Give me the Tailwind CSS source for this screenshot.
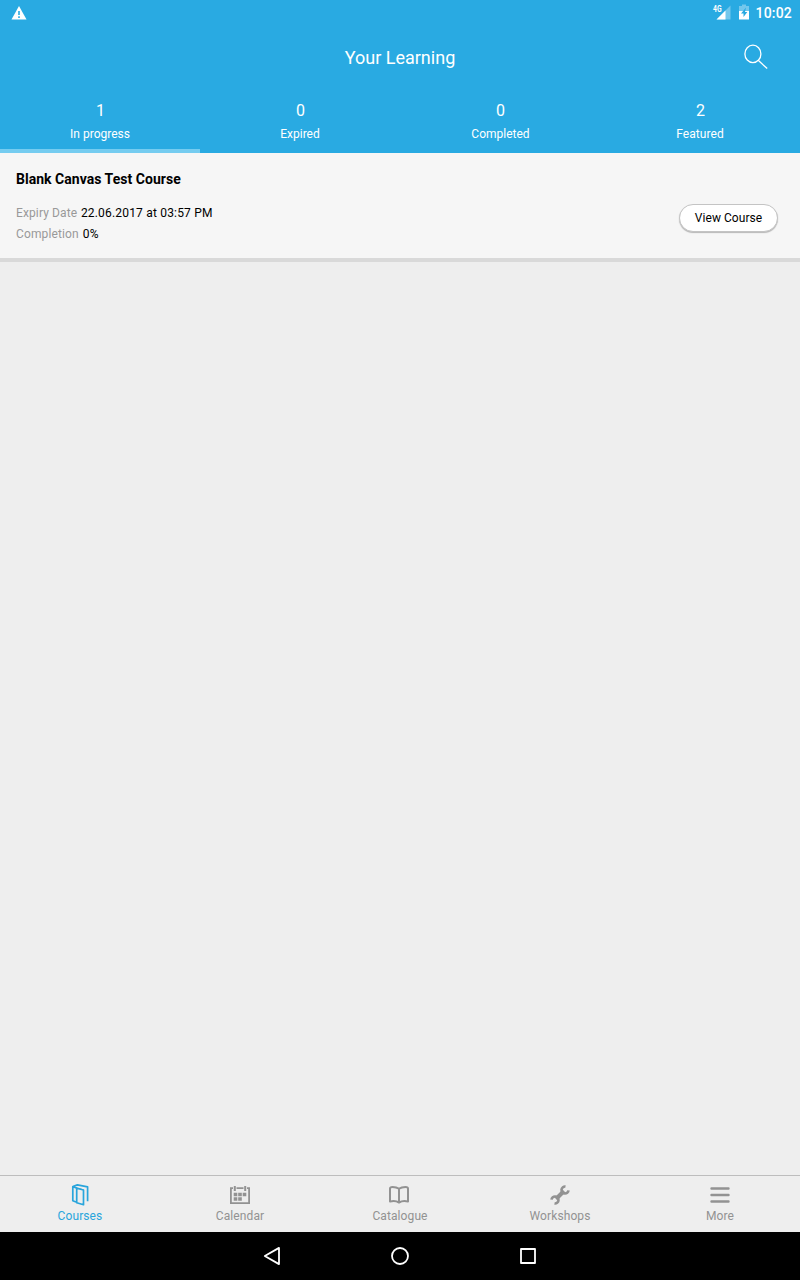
<!DOCTYPE html>
<html lang="en">
<head>
  <meta charset="UTF-8">
  <meta name="viewport" content="width=device-width, initial-scale=1.0">
  <title>Your Learning</title>
  <script src="https://cdn.jsdelivr.net/npm/@tailwindcss/browser@4"></script>
</head>
<body class="h-screen flex flex-col overflow-hidden bg-[#eeeeee] font-[Roboto,sans-serif] text-xs text-black">
  <header class="h-[153px] shrink-0 flex flex-col bg-[#29aae2] text-white">
    <!-- Status bar -->
    <div class="h-6 flex items-start justify-between pl-[11px] pr-2">
      <svg class="mt-[5px] w-4 h-4" viewBox="0 0 16 16" fill="none">
        <path d="M8 1 15.5 14.5H.5Z" fill="#fff" />
        <path d="M8 6v4M8 11.3v1.7" stroke="#29aae2" stroke-width="1.6" />
      </svg>
      <div class="flex">
        <svg class="w-[42px] h-6" viewBox="0 0 42 24" fill="none">
          <path d="M21.5 5.5v14h-14Z" fill="#fff" fill-opacity=".35" />
          <path d="M16.5 10.5v9h-9Z" fill="#fff" />
          <path d="M2 4h11v9H2Z" fill="#29aae2" />
          <text x="4" y="12" font-size="8.5" font-weight="700" fill="#fff" textLength="8.5" lengthAdjust="spacingAndGlyphs">4G</text>
          <path d="M33 4.5h4v1.5h3V11H30V6h3Z" fill="#fff" fill-opacity=".35" />
          <path d="M30 11h10v8.5H30Z" fill="#fff" />
          <path d="M37 7.5 32 13.4h2.5V17l3.8-5H36Z" fill="#29aae2" />
        </svg>
        <span class="pl-1 pt-[3px] text-sm leading-5 font-medium tracking-[.2px]">10:02</span>
      </div>
    </div>
    <!-- Title -->
    <div class="h-[66px] grid grid-cols-[1fr_auto_1fr] items-center">
      <h1 class="col-start-2 text-lg leading-6 pb-px mt-[3px]">Your Learning</h1>
      <svg class="w-7 h-7 justify-self-end mr-[30px]" viewBox="0 0 28 28" fill="none" stroke="#fff" stroke-width="1.3">
        <ellipse cx="10.9" cy="10.9" rx="8" ry="8.7" />
        <path d="m16.2 17.3 9 8.2" />
      </svg>
    </div>
    <!-- Tabs -->
    <nav class="flex-1 grid grid-cols-4 text-center">
      <a class="flex flex-col pt-[11px] border-b-4 border-[#75ccf0]">
        <span class="text-base leading-5 pl-px">1</span>
        <span class="pt-[5px] leading-4">In progress</span>
      </a>
      <a class="flex flex-col pt-[11px]">
        <span class="text-base leading-5 pl-px">0</span>
        <span class="pt-[5px] leading-4">Expired</span>
      </a>
      <a class="flex flex-col pt-[11px]">
        <span class="text-base leading-5 pl-px">0</span>
        <span class="pt-[5px] leading-4 pl-px">Completed</span>
      </a>
      <a class="flex flex-col pt-[11px]">
        <span class="text-base leading-5 pl-px">2</span>
        <span class="pt-[5px] leading-4 tracking-[.08px]">Featured</span>
      </a>
    </nav>
  </header>

  <main class="flex-1">
    <article class="h-[109px] flex justify-between pl-4 pr-[22px] bg-[#f6f6f6] border-b-4 border-[#d9d9d9]">
      <div>
        <h2 class="pt-4 text-sm leading-5 font-bold tracking-[.03px]">Blank Canvas Test Course</h2>
        <p class="pt-[14px] leading-[21px] tracking-[.12px] text-[#999]">Expiry Date <span class="ml-[.5px] tracking-[.19px] text-black">22.06.2017 at 03:57 PM</span></p>
        <p class="leading-[21px] tracking-[.12px] text-[#999]">Completion <span class="ml-px text-black">0%</span></p>
      </div>
      <button class="mt-[51px] w-[99px] h-7 rounded-full bg-white border border-[#c4c4c4] shadow-[0_1px_1px_#b8b8b8] tracking-[.05px]">View Course</button>
    </article>
  </main>

  <!-- Bottom tabs -->
  <nav class="h-[57px] shrink-0 grid grid-cols-5 border-t border-[#bdbdbd] text-center text-[#929292] tracking-[.1px]">
    <a class="flex flex-col items-center pt-[7px] text-[#29a5dc]">
      <svg class="w-6 h-6" viewBox="0 0 24 24" fill="none" stroke="currentColor" stroke-width="1.7" stroke-linejoin="round">
        <path d="M8.7 5.2 15.5 7v14.7L8.7 19.7ZM8.7 19.2l-3.9-1.4V3.5l3.9 1.7M4.8 3.5l4.6-1.6 10.2 2v14.3" />
        <path d="M4.8 3.5l10.7 3.4" stroke-width="1" />
      </svg>
      <span class="leading-4 pt-[1px]">Courses</span>
    </a>
    <a class="flex flex-col items-center pt-[7px]">
      <svg class="w-6 h-6" viewBox="0 0 24 24" fill="none" stroke="currentColor" stroke-width="1.8">
        <path d="M5 5.2H2.9v14.9h18.2V5.2H19M8.5 5.2h7" />
        <path d="M6.8 3v5M17.2 3v5" stroke-width="2" />
        <path d="M5.7 11.6h3.6m.9 0h3.6m.9 0h3.6M5.7 16h3.6m.9 0h3.6" stroke-width="3.5" />
      </svg>
      <span class="leading-4 pt-[1px]">Calendar</span>
    </a>
    <a class="flex flex-col items-center pt-[7px]">
      <svg class="w-6 h-6 -translate-x-px" viewBox="0 0 24 24" fill="none" stroke="currentColor" stroke-width="2" stroke-linejoin="round">
        <path d="M12 5.8Q9.5 4 5.500 4 3 4 3 5.500V18.600q5-1.300 9 .9 4-2.200 9-.9V5.500Q21 4 18.500 4 14.500 4 12 5.800v13.700" />
      </svg>
      <span class="leading-4 pt-[1px]">Catalogue</span>
    </a>
    <a class="flex flex-col items-center pt-[7px]">
      <svg class="w-6 h-6" viewBox="0 0 24 24" fill="none" stroke="currentColor">
        <path d="m8 16 8-8" stroke-width="4" />
        <path d="M17.500 3.500a3.500 3.500 0 1 0 3 3.800M6.500 20.500a3.500 3.500 0 1 0-3-3.800" stroke-width="2.600" />
      </svg>
      <span class="leading-4 pt-[1px]">Workshops</span>
    </a>
    <a class="flex flex-col items-center pt-[7px]">
      <svg class="w-6 h-6" viewBox="0 0 24 24" fill="none" stroke="currentColor" stroke-width="2.4" stroke-linecap="round">
        <path d="M3.5 5.5h17M3.5 12h17M3.5 18.5h17" />
      </svg>
      <span class="leading-4 pt-[1px]">More</span>
    </a>
  </nav>

  <!-- System navigation -->
  <footer class="h-12 shrink-0 flex items-center justify-center gap-[104px] bg-black">
    <svg class="w-6 h-6" viewBox="0 0 24 24" fill="none" stroke="#fff" stroke-width="1.8" stroke-linejoin="round">
      <path d="M19 3.9v16.2L4.8 12Z" />
    </svg>
    <svg class="w-6 h-6" viewBox="0 0 24 24" fill="none" stroke="#fff" stroke-width="1.8">
      <circle cx="12" cy="12" r="8" />
    </svg>
    <svg class="w-6 h-6" viewBox="0 0 24 24" fill="none" stroke="#fff" stroke-width="1.8" stroke-linejoin="round">
      <path d="M5 5h14v14H5Z" />
    </svg>
  </footer>
</body>
</html>
